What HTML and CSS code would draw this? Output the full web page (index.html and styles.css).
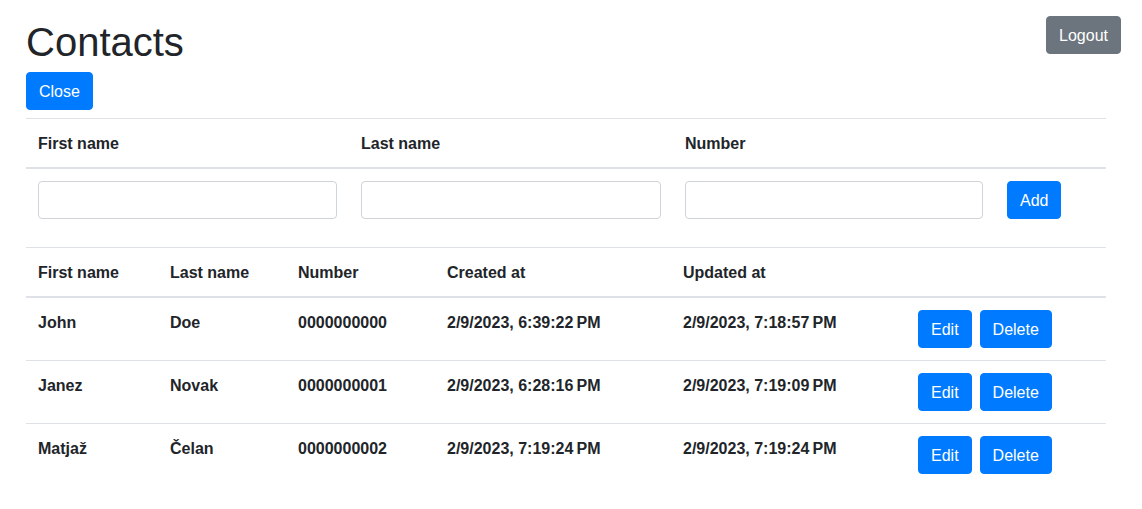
FILE: index.html
```html
<!DOCTYPE html>
<html lang="en">
<head>
<meta charset="utf-8">
<title>Contacts</title>
<link rel="stylesheet" href="styles.css">
</head>
<body>
<div class="page">
  <div class="topbar">
    <h1 class="title">Contacts</h1>
    <button class="btn btn-secondary">Logout</button>
  </div>
  <div class="content">
    <button class="btn btn-primary">Close</button>
    <table class="table form-table">
      <colgroup><col class="c1"><col class="c2"><col class="c3"><col class="c4"></colgroup>
      <thead>
        <tr><th>First name</th><th>Last name</th><th>Number</th><th></th></tr>
      </thead>
      <tbody>
        <tr>
          <td class="ctrl"><input class="input" type="text"></td>
          <td class="ctrl"><input class="input" type="text"></td>
          <td class="ctrl"><input class="input" type="text"></td>
          <td class="ctrl"><button class="btn btn-primary">Add</button></td>
        </tr>
      </tbody>
    </table>
    <table class="table list-table">
      <colgroup><col class="d1"><col class="d2"><col class="d3"><col class="d4"><col class="d5"><col class="d6"></colgroup>
      <thead>
        <tr><th>First name</th><th>Last name</th><th>Number</th><th>Created at</th><th>Updated at</th><th></th></tr>
      </thead>
      <tbody>
        <tr>
          <th>John</th><th>Doe</th><th>0000000000</th><th>2/9/2023, 6:39:22&#8239;PM</th><th>2/9/2023, 7:18:57&#8239;PM</th>
          <td class="ctrl"><div class="actions"><button class="btn btn-primary">Edit</button><button class="btn btn-primary">Delete</button></div></td>
        </tr>
        <tr>
          <th>Janez</th><th>Novak</th><th>0000000001</th><th>2/9/2023, 6:28:16&#8239;PM</th><th>2/9/2023, 7:19:09&#8239;PM</th>
          <td class="ctrl"><div class="actions"><button class="btn btn-primary">Edit</button><button class="btn btn-primary">Delete</button></div></td>
        </tr>
        <tr>
          <th>Matjaž</th><th>Čelan</th><th>0000000002</th><th>2/9/2023, 7:19:24&#8239;PM</th><th>2/9/2023, 7:19:24&#8239;PM</th>
          <td class="ctrl"><div class="actions"><button class="btn btn-primary">Edit</button><button class="btn btn-primary">Delete</button></div></td>
        </tr>
      </tbody>
    </table>
  </div>
</div>
</body>
</html>
```
FILE: styles.css
```css
html, body {
  margin: 0;
  padding: 0;
  background: #fff;
}
body {
  font-family: "Liberation Sans", Arial, sans-serif;
  font-size: 16px;
  line-height: 24px;
  color: #212529;
}
.page {
  padding: 16px 21px 0 26px;
}
.topbar {
  display: flex;
  justify-content: space-between;
  align-items: flex-start;
}
.title {
  margin: 0 0 8px 0;
  padding-top: 4px;
  font-size: 40px;
  line-height: 44px;
  font-weight: 500;
}
.content {
  width: 1080px;
}
.btn {
  display: inline-block;
  font-family: inherit;
  font-size: 16px;
  line-height: 24px;
  padding: 7px 12px 5px;
  border: 1px solid transparent;
  border-radius: 4px;
  color: #fff;
  cursor: pointer;
  margin: 0;
}
.btn-primary {
  background: #007bff;
  border-color: #007bff;
}
.btn-secondary {
  background: #6c757d;
  border-color: #6c757d;
}
.table {
  width: 1080px;
  border-collapse: collapse;
  table-layout: fixed;
  margin-bottom: 16px;
}
.form-table {
  margin-top: 8px;
}
.table th, .table td {
  padding: 13px 12px 11px;
  text-align: left;
  vertical-align: top;
  border-top: 1px solid #dee2e6;
  font-weight: 700;
}
.table td.ctrl {
  padding: 12px;
}
.table thead th {
  border-bottom: 2px solid #dee2e6;
}
.c1 { width: 323px; }
.c2 { width: 324px; }
.c3 { width: 322px; }
.c4 { width: 111px; }
.d1 { width: 132px; }
.d2 { width: 128px; }
.d3 { width: 149px; }
.d4 { width: 236px; }
.d5 { width: 235px; }
.d6 { width: 200px; }
.input {
  display: block;
  box-sizing: border-box;
  width: 100%;
  height: 38px;
  padding: 6px 12px;
  font-family: inherit;
  font-size: 16px;
  border: 1px solid #ced4da;
  border-radius: 4px;
  background: #fff;
  margin: 0;
}
.actions {
  display: flex;
  gap: 8px;
}
```
